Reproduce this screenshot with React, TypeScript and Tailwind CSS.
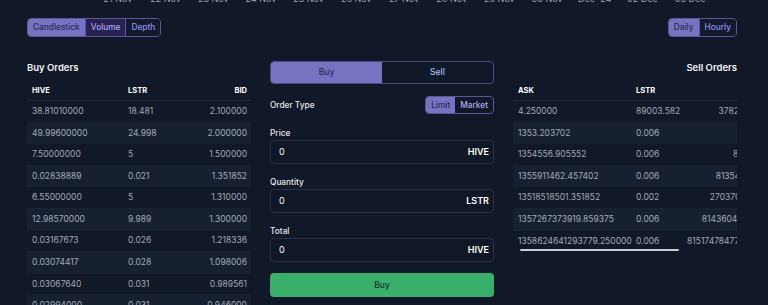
import React from 'react';

const AXIS = ['21 Nov', '22 Nov', '23 Nov', '24 Nov', '25 Nov', '26 Nov', '27 Nov', '28 Nov', '29 Nov', '30 Nov', "Dec '24", '02 Dec', '03 Dec'];

const BUY_ORDERS = [
  ['38.81010000', '18.481', '2.100000'],
  ['49.99600000', '24.998', '2.000000'],
  ['7.50000000', '5', '1.500000'],
  ['0.02838889', '0.021', '1.351852'],
  ['6.55000000', '5', '1.310000'],
  ['12.98570000', '9.989', '1.300000'],
  ['0.03167673', '0.026', '1.218336'],
  ['0.03074417', '0.028', '1.098006'],
  ['0.03067640', '0.031', '0.989561'],
  ['0.02994000', '0.031', '0.946000'],
];

const SELL_ORDERS = [
  ['4.250000', '89003.582', '378265.223500'],
  ['1353.203702', '0.006', '8.119222'],
  ['1354556.905552', '0.006', '8127.341433'],
  ['1355911462.457402', '0.006', '8135468.774744'],
  ['13518518501.351852', '0.002', '27037037.002704'],
  ['1357267373919.859375', '0.006', '8143604243.519156'],
  ['1358624641293779.250000', '0.006', '8151747847762.675500'],
];

function Toggle({ items, active }: { items: string[]; active: number }) {
  return (
    <div className="flex h-[19px] overflow-hidden rounded-[4px] border border-[#57579a]">
      {items.map((label, i) => (
        <span
          key={label}
          className={`flex items-center px-[5px] text-[8.3px] font-medium ${
            i === active
              ? 'bg-[#7673c2] text-[#2b2c58]'
              : i === 1 && items.length === 3
                ? 'bg-[#272251] text-[#aaa4f3]'
                : 'bg-[#121a2b] text-[#8c8ff4]'
          } ${i > 0 ? 'border-l border-[#57579a]' : ''}`}
        >
          {label}
        </span>
      ))}
    </div>
  );
}

function Field({ label, unit }: { label: string; unit: string }) {
  return (
    <div className="flex flex-col">
      <span className="h-[12px] text-[8.3px] font-medium leading-[12px] text-[#e5e7eb]">{label}</span>
      <div className="mt-[1px] flex h-[24px] items-center justify-between rounded-[4px] border border-[#293243] bg-[#101725] pl-[8px] pr-[4px] text-[9px]">
        <span className="text-white">0</span>
        <span className="font-semibold text-white">{unit}</span>
      </div>
    </div>
  );
}

export default function App() {
  return (
    <div className="h-[305px] w-[768px] overflow-hidden bg-[#111827] text-gray-400" style={{ fontFamily: 'Inter, "Noto Sans", sans-serif' }}>
      {/* chart x-axis, clipped from the panel above */}
      <div className="h-[4px] overflow-hidden">
        <div className="-mt-[6px] flex pl-[94px] text-[9px] leading-[10px] text-[#9ca3af]">
          {AXIS.map((d) => (
            <span key={d} className="w-[47.7px] shrink-0 text-center">
              {d}
            </span>
          ))}
        </div>
      </div>

      <div className="mt-[14px] flex justify-between pl-[27px] pr-[31px]">
        <Toggle items={['Candlestick', 'Volume', 'Depth']} active={0} />
        <Toggle items={['Daily', 'Hourly']} active={0} />
      </div>

      <div className="mt-[23px] flex gap-[19px] pl-[27px]">
        {/* Buy orders */}
        <div className="w-[224px] shrink-0">
          <div className="h-[16px] text-[9.5px] font-semibold leading-[16px] text-[#f3f4f6]">Buy Orders</div>
          <div className="mt-[6px] flex h-[19px] items-center border-b border-[#222b3b] pb-[1px] text-[7.5px] font-bold text-white">
            <span className="w-[96px] pl-[5px]">HIVE</span>
            <span className="flex-1 pl-[5px]">LSTR</span>
            <span className="pr-[4px]">BID</span>
          </div>
          {BUY_ORDERS.map((r, i) => (
            <div
              key={i}
              className={`flex h-[21.6px] items-center border-b border-[#1a2232] text-[8.5px] text-[#a3a9b5] ${i % 2 === 1 ? 'bg-[#172031]' : ''}`}
            >
              <span className="w-[96px] pl-[5px]">{r[0]}</span>
              <span className="flex-1 pl-[5px]">{r[1]}</span>
              <span className="pr-[4px]">{r[2]}</span>
            </div>
          ))}
        </div>

        {/* Order form */}
        <div className="flex w-[224px] shrink-0 flex-col pt-[1px]">
          <div className="flex h-[23px] overflow-hidden rounded-[4px] border border-[#454c86] text-[8.5px] font-medium">
            <span className="flex flex-1 items-center justify-center bg-[#7673c2] text-[#2b2c58]">Buy</span>
            <span className="flex flex-1 items-center justify-center text-[#b7baf6]">Sell</span>
          </div>
          <div className="mt-[12px] flex h-[18px] items-center justify-between">
            <span className="text-[8.3px] font-medium text-[#e5e7eb]">Order Type</span>
            <div className="flex h-[18px] overflow-hidden rounded-[4px] border border-[#57579a] text-[8.3px] font-medium">
              <span className="flex items-center bg-[#7673c2] px-[5px] text-[#2b2c58]">Limit</span>
              <span className="flex items-center px-[5px] text-[#aaadf4]">Market</span>
            </div>
          </div>
          <div className="mt-[13px] flex flex-col gap-[12px]">
            <Field label="Price" unit="HIVE" />
            <Field label="Quantity" unit="LSTR" />
            <Field label="Total" unit="HIVE" />
          </div>
          <div className="mt-[11px] flex h-[24px] items-center justify-center rounded-[4px] bg-[#3aae6b] text-[8.5px] font-medium text-[#17382a]">
            Buy
          </div>
        </div>

        {/* Sell orders */}
        <div className="w-[224px] shrink-0">
          <div className="h-[16px] text-right text-[9.5px] font-semibold leading-[16px] text-[#f3f4f6]">Sell Orders</div>
          <div className="relative mt-[6px] overflow-hidden">
            <div className="w-[275px]">
              <div className="flex h-[19px] items-center border-b border-[#222b3b] pb-[1px] text-[7.5px] font-bold text-white">
                <span className="w-[118px] pl-[5px]">ASK</span>
                <span className="w-[52px] pl-[5px]">LSTR</span>
                <span className="w-[105px] pr-[5px] text-right">HIVE</span>
              </div>
              {SELL_ORDERS.map((r, i) => (
                <div
                  key={i}
                  className={`flex h-[21.6px] items-center whitespace-nowrap text-[8.5px] text-[#a3a9b5] ${i % 2 === 1 ? 'bg-[#172031]' : ''} ${i < SELL_ORDERS.length - 1 ? 'border-b border-[#1a2232]' : ''}`}
                >
                  <span className="w-[118px] shrink-0 pl-[5px]">{r[0]}</span>
                  <span className="w-[52px] shrink-0 pl-[5px]">{r[1]}</span>
                  <span className="w-[105px] shrink-0 pr-[5px] text-right">{r[2]}</span>
                </div>
              ))}
            </div>
            {/* overlay scrollbar thumb */}
            <div className="absolute bottom-[1px] left-[7px] h-[2px] w-[159px] rounded-full bg-[#c9cdd4]" />
          </div>
        </div>
      </div>
    </div>
  );
}
